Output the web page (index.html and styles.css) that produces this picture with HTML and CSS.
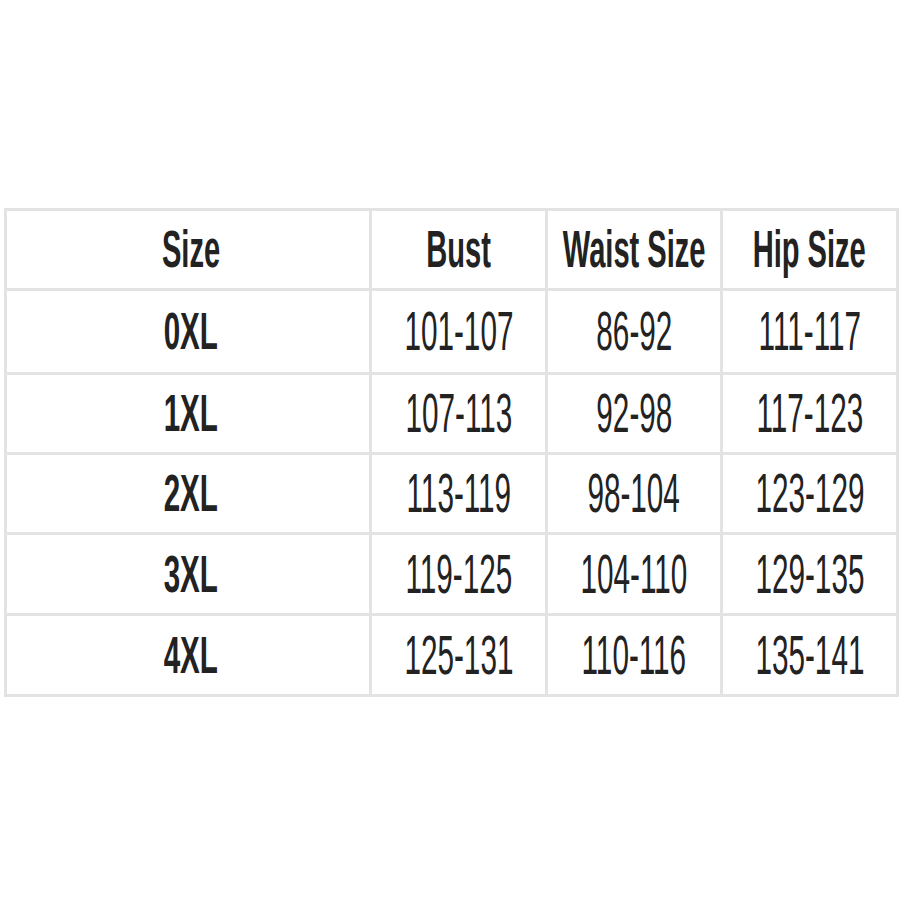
FILE: index.html
```html
<!DOCTYPE html>
<html>
<head>
<meta charset="utf-8">
<link rel="stylesheet" href="styles.css">
</head>
<body>
<div class="page">
  <div class="chart">
    <div class="cell head first"><span>Size</span></div>
    <div class="cell head"><span>Bust</span></div>
    <div class="cell head"><span>Waist Size</span></div>
    <div class="cell head"><span>Hip Size</span></div>

    <div class="cell size first"><span>0XL</span></div>
    <div class="cell num"><span>101-107</span></div>
    <div class="cell num"><span>86-92</span></div>
    <div class="cell num"><span>111-117</span></div>

    <div class="cell size first"><span>1XL</span></div>
    <div class="cell num"><span>107-113</span></div>
    <div class="cell num"><span>92-98</span></div>
    <div class="cell num"><span>117-123</span></div>

    <div class="cell size first"><span>2XL</span></div>
    <div class="cell num"><span>113-119</span></div>
    <div class="cell num"><span>98-104</span></div>
    <div class="cell num"><span>123-129</span></div>

    <div class="cell size first"><span>3XL</span></div>
    <div class="cell num"><span>119-125</span></div>
    <div class="cell num"><span>104-110</span></div>
    <div class="cell num"><span>129-135</span></div>

    <div class="cell size first"><span>4XL</span></div>
    <div class="cell num"><span>125-131</span></div>
    <div class="cell num"><span>110-116</span></div>
    <div class="cell num"><span>135-141</span></div>
  </div>
</div>
</body>
</html>
```
FILE: styles.css
```css
html, body {
  margin: 0;
  padding: 0;
  background: #ffffff;
}

.page {
  width: 906px;
  height: 906px;
  padding: 208px 0 0 4px;
  box-sizing: border-box;
}

.chart {
  width: 895px;
  box-sizing: border-box;
  display: grid;
  grid-template-columns: 362px 173px 172px 173px;
  grid-template-rows: 77px 81px 77px 77px 78px 78px;
  gap: 3px;
  padding: 3px;
  background: #e3e3e3;
}

.cell {
  background: #ffffff;
  display: flex;
  align-items: center;
  justify-content: center;
  font-family: "Liberation Sans", Arial, sans-serif;
  color: #222222;
  line-height: 1;
  white-space: nowrap;
}

.cell.first {
  padding-left: 6px;
}

.cell span {
  display: inline-block;
}

.head span {
  font-weight: bold;
  font-size: 51px;
  transform: scaleX(0.57);
}

.size span {
  font-weight: bold;
  font-size: 51px;
  transform: scaleX(0.58);
}

.num span {
  font-weight: normal;
  font-size: 55px;
  transform: scaleX(0.54);
}
```
